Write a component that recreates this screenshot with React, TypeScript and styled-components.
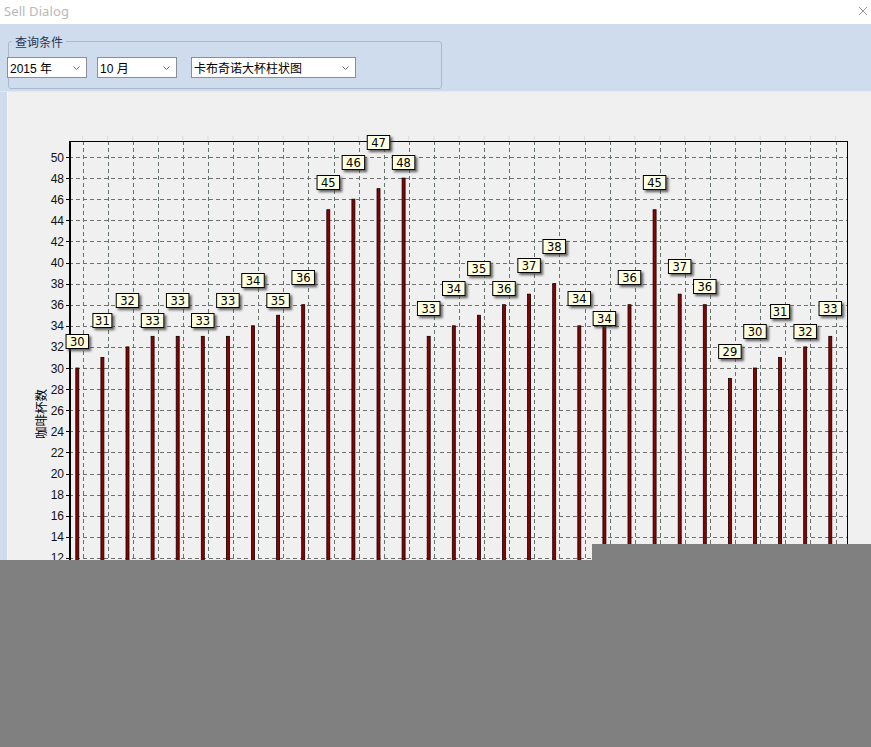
import React from "react";
import styled, { createGlobalStyle } from "styled-components";

const Global = createGlobalStyle`
  html, body { margin: 0; padding: 0; overflow: hidden; background: #ffffff; }
  body { font-family: "Liberation Sans", "Noto Sans CJK SC", sans-serif; }
`;

const Window = styled.div`
  position: relative;
  width: 871px;
  height: 747px;
  display: flex;
  flex-direction: column;
  overflow: hidden;
  background: #cfdced;
`;

const TitleBar = styled.div`
  flex: none;
  height: 24px;
  background: #ffffff;
  display: flex;
  align-items: center;
  justify-content: space-between;
  padding: 0 3px 2px 4px;
  box-sizing: border-box;
`;

const Title = styled.span`
  font-family: "Noto Sans", "Liberation Sans", sans-serif;
  font-size: 13px;
  color: #b8b8b8;
  letter-spacing: 0.1px;
`;

const CloseIcon = styled.svg`
  width: 10px;
  height: 10px;
  display: block;
`;

const QueryArea = styled.div`
  flex: none;
  height: 68px;
  box-sizing: border-box;
  border-bottom: 1px solid #e2e9f3;
`;

const GroupBox = styled.fieldset`
  box-sizing: border-box;
  margin: 9px 0 0 8px;
  padding: 0;
  width: 434px;
  height: 56px;
  border: 1px solid #a9b9cd;
  border-radius: 3px;
  min-width: 0;
`;

const GroupLegend = styled.legend`
  margin-left: 3px;
  padding: 0 3px;
  font-family: "Noto Sans CJK SC", sans-serif;
  font-size: 12px;
  line-height: 17px;
  color: #1f3553;
`;

const ComboRow = styled.div`
  display: flex;
  align-items: center;
  margin: 7px 0 0 -2px;
`;

const Combo = styled.div<{ $w: number; $gap: number }>`
  box-sizing: border-box;
  width: ${(p) => p.$w}px;
  height: 21px;
  margin-right: ${(p) => p.$gap}px;
  background: #ffffff;
  border: 1px solid #8a8f96;
  display: flex;
  align-items: center;
  justify-content: space-between;
  padding: 0 6px 0 2px;
  font-family: "Liberation Sans", "Noto Sans CJK SC", sans-serif;
  font-size: 12px;
  color: #000000;
`;

const Chevron = styled.svg`
  width: 7px;
  height: 4px;
  display: block;
`;

const Body = styled.div`
  flex: 1;
  display: flex;
  padding-left: 7px;
  min-height: 0;
`;

const ChartPanel = styled.div`
  flex: 1;
  background: #f0f0f0;
  border-left: 1px solid #f8f8f8;
  overflow: hidden;
`;

const ChartSvg = styled.svg`
  display: block;
`;

const Cover = styled.div<{ $x: number; $y: number; $w: number; $h: number }>`
  position: absolute;
  left: ${(p) => p.$x}px;
  top: ${(p) => p.$y}px;
  width: ${(p) => p.$w}px;
  height: ${(p) => p.$h}px;
  background: #808080;
`;

const values = [
  30, 31, 32, 33, 33, 33, 33, 34, 35, 36, 45, 46, 47, 48, 33, 34, 35, 36, 37, 38,
  34, 34, 36, 45, 37, 36, 29, 30, 31, 32, 33,
];
const labelY = [
  342, 321, 301, 321, 301, 321, 301, 281, 301, 278, 183, 163, 143, 163, 309, 289,
  269, 289, 266, 247, 299, 319, 278, 183, 267, 287, 352, 332, 312, 332, 309,
];

const LEFT = 68;
const RIGHT = 846;
const TOP = 141;
const STEP = 25.1;
const yOf = (v: number) => 157 + (50 - v) * 10.55;
const barX = (i: number) => 76.3 + STEP * i;
const gridX = (k: number) => 81.5 + STEP * k;

function Chart() {
  const ticks: number[] = [];
  for (let v = 50; v >= 0; v -= 2) ticks.push(v);
  const bottom = 747;
  return (
    <ChartSvg width={864} height={655} viewBox="7 92 864 655">
      <defs>
        <filter id="lblShadow" x="-30%" y="-30%" width="170%" height="190%">
          <feDropShadow dx="2.2" dy="2.2" stdDeviation="1.1" floodColor="#3a3a3a" floodOpacity="0.75" />
        </filter>
      </defs>
      {/* faint marks above frame */}
      {values.map((_, k) => (
        <line
          key={"m" + k}
          x1={gridX(k)}
          x2={gridX(k)}
          y1={136}
          y2={140}
          stroke="#dadada"
          strokeWidth={1}
        />
      ))}
      {/* horizontal grid */}
      {ticks.map((v) => (
        <line
          key={"h" + v}
          x1={LEFT}
          x2={RIGHT}
          y1={Math.round(yOf(v)) + 0.5}
          y2={Math.round(yOf(v)) + 0.5}
          stroke="#707070"
          strokeWidth={1}
          strokeDasharray="4 3"
        />
      ))}
      {/* vertical grid */}
      {values.map((_, k) => (
        <line
          key={"v" + k}
          x1={Math.round(gridX(k)) + 0.5}
          x2={Math.round(gridX(k)) + 0.5}
          y1={TOP}
          y2={bottom}
          stroke="#66736a"
          strokeWidth={1}
          strokeDasharray="4 3"
        />
      ))}
      {/* frame */}
      <line x1={LEFT} x2={RIGHT + 1} y1={TOP + 0.5} y2={TOP + 0.5} stroke="#000" strokeWidth={1} />
      <line x1={RIGHT + 0.5} x2={RIGHT + 0.5} y1={TOP} y2={bottom} stroke="#000" strokeWidth={1} />
      <line x1={LEFT + 1} x2={LEFT + 1} y1={TOP} y2={bottom} stroke="#000" strokeWidth={2} />
      {/* y ticks and labels */}
      {ticks.map((v) => (
        <g key={"t" + v}>
          <line
            x1={65}
            x2={LEFT}
            y1={Math.round(yOf(v)) + 0.5}
            y2={Math.round(yOf(v)) + 0.5}
            stroke="#000"
            strokeWidth={1}
          />
          <text
            x={63}
            y={yOf(v) + 4.5}
            textAnchor="end"
            fontFamily="Liberation Sans, Arial, sans-serif"
            fontSize={12}
            fill="#111"
          >
            {v}
          </text>
        </g>
      ))}
      {/* y axis title */}
      <text
        transform="translate(45 414) rotate(-90)"
        textAnchor="middle"
        fontFamily="Noto Sans CJK SC, sans-serif"
        fontSize={12.5}
        fill="#000"
      >
        咖啡杯数
      </text>
      {/* bars */}
      {values.map((v, i) => (
        <rect
          key={"b" + i}
          x={barX(i) - 1.5}
          y={yOf(v)}
          width={3}
          height={bottom - yOf(v)}
          fill="#8c0000"
          stroke="#0a0000"
          strokeWidth={0.8}
        />
      ))}
      {/* value labels */}
      {values.map((v, i) => {
        const cx = barX(i);
        const cy = labelY[i];
        const w = String(v).includes("1") ? 19 : 22.5;
        return (
          <g key={"l" + i}>
            <rect
              x={cx - w / 2}
              y={cy - 7.5}
              width={w}
              height={14}
              fill="#ffffe1"
              stroke="#000"
              strokeWidth={1}
              filter="url(#lblShadow)"
            />
            <text
              x={cx}
              y={cy + 4.2}
              textAnchor="middle"
              fontFamily="DejaVu Sans, Verdana, sans-serif"
              fontSize={11.5}
              fill="#000"
            >
              {v}
            </text>
          </g>
        );
      })}
    </ChartSvg>
  );
}

function ChevronDown() {
  return (
    <Chevron viewBox="0 0 7 4">
      <polyline points="0.5,0.5 3.5,3.5 6.5,0.5" fill="none" stroke="#6e6e6e" strokeWidth={1} />
    </Chevron>
  );
}

export default function App() {
  return (
    <>
      <Global />
      <Window>
        <TitleBar>
          <Title>Sell Dialog</Title>
          <CloseIcon viewBox="0 0 10 10">
            <line x1="1" y1="1" x2="9" y2="9" stroke="#9a9a9a" strokeWidth={1} />
            <line x1="9" y1="1" x2="1" y2="9" stroke="#9a9a9a" strokeWidth={1} />
          </CloseIcon>
        </TitleBar>
        <QueryArea>
          <GroupBox>
            <GroupLegend>查询条件</GroupLegend>
            <ComboRow>
              <Combo $w={80} $gap={10}>
                <span>2015 年</span>
                <ChevronDown />
              </Combo>
              <Combo $w={80} $gap={14}>
                <span>10 月</span>
                <ChevronDown />
              </Combo>
              <Combo $w={165} $gap={0}>
                <span>卡布奇诺大杯柱状图</span>
                <ChevronDown />
              </Combo>
            </ComboRow>
          </GroupBox>
        </QueryArea>
        <Body>
          <ChartPanel>
            <Chart />
          </ChartPanel>
        </Body>
        <Cover $x={0} $y={560} $w={871} $h={187} />
        <Cover $x={592} $y={544} $w={279} $h={16} />
      </Window>
    </>
  );
}
